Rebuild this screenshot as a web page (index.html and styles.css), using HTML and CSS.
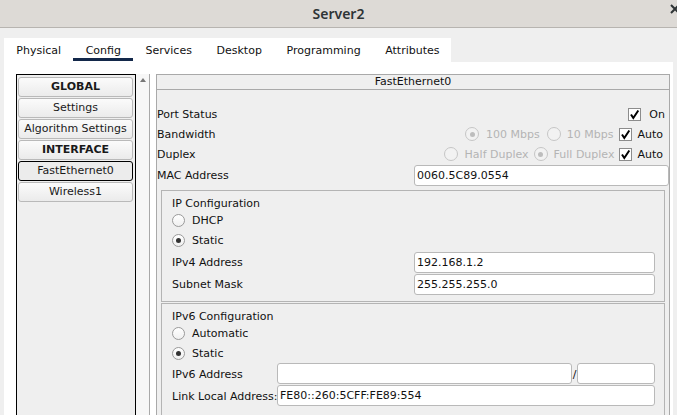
FILE: index.html
```html
<!DOCTYPE html>
<html>
<head>
<meta charset="utf-8">
<link rel="stylesheet" href="styles.css">
</head>
<body>
<div class="titlebar">
  <span class="title">Server2</span>
  <svg class="close" width="12" height="12" viewBox="0 0 12 12"><path d="M2 2 L10 10 M10 2 L2 10" stroke="#2e3436" stroke-width="2" fill="none"/></svg>
</div>
<div class="tabbar">
  <div class="tabs">
    <span class="tab">Physical</span>
    <span class="tab active">Config</span>
    <span class="tab">Services</span>
    <span class="tab">Desktop</span>
    <span class="tab">Programming</span>
    <span class="tab">Attributes</span>
  </div>
</div>
<div class="page">
  <div class="sidebar">
    <div class="btn bold">GLOBAL</div>
    <div class="btn">Settings</div>
    <div class="btn">Algorithm Settings</div>
    <div class="btn bold">INTERFACE</div>
    <div class="btn sel">FastEthernet0</div>
    <div class="btn">Wireless1</div>
  </div>
  <div class="scroll"><span class="arrow"></span></div>
  <div class="panel">
    <div class="phead">FastEthernet0</div>
    <div class="pbody">
      <div class="row">
        <span class="lbl">Port Status</span>
        <div class="ctrls pad5">
          <span class="chk"><svg width="11" height="11" viewBox="0 0 11 11"><path d="M2 5.5 L4.3 9 L9.3 1.5" stroke="#000" stroke-width="2" fill="none"/></svg></span>
          <span class="gap8">On</span>
        </div>
      </div>
      <div class="row">
        <span class="lbl">Bandwidth</span>
        <div class="ctrls">
          <span class="radio dis on"></span><span class="dtxt g7">100 Mbps</span>
          <span class="radio dis g7"></span><span class="dtxt g6">10 Mbps</span>
          <span class="chk g6"><svg width="11" height="11" viewBox="0 0 11 11"><path d="M2 5.5 L4.3 9 L9.3 1.5" stroke="#000" stroke-width="2" fill="none"/></svg></span><span class="g5">Auto</span>
        </div>
      </div>
      <div class="row">
        <span class="lbl">Duplex</span>
        <div class="ctrls">
          <span class="radio dis"></span><span class="dtxt g7">Half Duplex</span>
          <span class="radio dis on g5"></span><span class="dtxt g6">Full Duplex</span>
          <span class="chk g5"><svg width="11" height="11" viewBox="0 0 11 11"><path d="M2 5.5 L4.3 9 L9.3 1.5" stroke="#000" stroke-width="2" fill="none"/></svg></span><span class="g5">Auto</span>
        </div>
      </div>
      <div class="row mac">
        <span class="lbl maclbl">MAC Address</span>
        <div class="input grow">0060.5C89.0554</div>
      </div>

      <div class="group ipv4">
        <div class="gtitle">IP Configuration</div>
        <div class="rrow"><span class="radio en"></span><span class="g7">DHCP</span></div>
        <div class="rrow"><span class="radio en on"></span><span class="g7">Static</span></div>
        <div class="irow"><span class="glbl">IPv4 Address</span><div class="input grow">192.168.1.2</div></div>
        <div class="irow"><span class="glbl">Subnet Mask</span><div class="input grow">255.255.255.0</div></div>
      </div>

      <div class="group ipv6">
        <div class="gtitle">IPv6 Configuration</div>
        <div class="rrow"><span class="radio en"></span><span class="g7">Automatic</span></div>
        <div class="rrow"><span class="radio en on"></span><span class="g7">Static</span></div>
        <div class="irow"><span class="glbl6">IPv6 Address</span><div class="input grow"></div><span class="slash">/</span><div class="input prefix"></div></div>
        <div class="irow"><span class="glbl6">Link Local Address:</span><div class="input grow">FE80::260:5CFF:FE89:554</div></div>
      </div>
    </div>
  </div>
</div>
</body>
</html>
```
FILE: styles.css
```css
* { box-sizing: border-box; }
body {
  margin: 0;
  font: 11px "DejaVu Sans", sans-serif;
  color: #111;
  background: #efefef;
  height: 415px;
  overflow: hidden;
}
.titlebar {
  height: 28px;
  background: #dddad6;
  border-bottom: 1px solid #b7b4b0;
  display: flex;
  align-items: center;
  justify-content: center;
  position: relative;
}
.title {
  font-family: "Noto Sans", sans-serif;
  font-weight: 600;
  font-size: 14px;
  color: #2e3436;
}
.close { position: absolute; right: -4px; top: 3px; }
.tabbar { padding: 10px 0 0 4px; }
.tabs {
  display: flex;
  background: #fff;
  width: 447px;
  height: 24px;
}
.tab {
  padding: 2px 12.3px 0;
  line-height: 22px;
  position: relative;
  color: #111;
}
.tab.active::after {
  content: "";
  position: absolute;
  left: 0; right: 0; bottom: 1px;
  height: 3px;
  background: #13284a;
}
.page {
  background: #fff;
  margin: 0 4px;
  display: flex;
  align-items: flex-start;
  padding: 12px 3px 0 12px;
  height: 360px;
}
.sidebar {
  width: 120px;
  height: 400px;
  border: 1px solid #000;
  background: #efefef;
  padding: 2px 2px 0 1px;
  flex: none;
}
.btn {
  height: 20px;
  margin-bottom: 1px;
  border: 1px solid #b9b9b9;
  border-radius: 3px;
  background: linear-gradient(#fbfbfb, #ebebeb);
  text-align: center;
  line-height: 18px;
  color: #1a1a1a;
}
.btn.bold { font-weight: bold; }
.btn.sel { border-color: #000; background: #ececec; }
.scroll {
  width: 14px;
  height: 400px;
  background: #f7f7f7;
  border-right: 1px solid #a9a9a9;
  flex: none;
  display: flex;
  justify-content: center;
  padding-top: 4px;
}
.arrow {
  width: 0; height: 0;
  border-left: 3.5px solid transparent;
  border-right: 3.5px solid transparent;
  border-bottom: 4px solid #777;
}
.panel {
  width: 514px;
  height: 400px;
  margin-left: 6px;
  border: 1px solid #a9a9a9;
  background: #efefef;
  flex: none;
}
.phead {
  height: 15px;
  border-bottom: 1px solid #a9a9a9;
  text-align: center;
  line-height: 13px;
}
.pbody { padding: 14px 0 0 0; }
.row {
  height: 20px;
  display: flex;
  align-items: center;
}
.ctrls {
  margin-left: auto;
  display: flex;
  align-items: center;
  padding-right: 6px;
}
.ctrls.pad5 { padding-right: 4px; }
.row.mac { height: 21px; margin-top: 1px; }
.maclbl { width: 257px; flex: none; }
.dtxt { color: #b4b4b4; }
.g5 { margin-left: 5px; }
.g6 { margin-left: 6px; }
.g7 { margin-left: 7px; }
.gap8 { margin-left: 8px; }
.chk {
  width: 13px; height: 13px;
  border: 1px solid #8c8c8c;
  background: #fff;
  display: flex;
  align-items: center;
  justify-content: center;
  flex: none;
}
.radio {
  width: 13px; height: 13px;
  border-radius: 50%;
  border: 1px solid #9a9a9a;
  background: linear-gradient(#fff, #f0f0f0);
  display: flex;
  align-items: center;
  justify-content: center;
  flex: none;
}
.radio.dis { width: 14px; height: 14px; border-color: #c6c6c6; background: #f2f2f2; }
.radio.on::after {
  content: "";
  width: 5px; height: 5px;
  border-radius: 50%;
  background: #333;
}
.radio.dis.on::after { background: #bdbdbd; }
.input {
  height: 21px;
  border: 1px solid #b9b9b9;
  border-radius: 3px;
  background: #fff;
  padding-left: 2px;
  line-height: 19px;
  color: #111;
}
.grow { flex: 1; }
.group {
  border: 1px solid #b4b4b4;
  margin: 4px 4px 0 4px;
  padding: 5px 9px 7px 10px;
}
.group.ipv6 { margin-top: 1px; padding-bottom: 30px; }
.gtitle { height: 14px; line-height: 15px; }
.rrow {
  height: 20px;
  display: flex;
  align-items: center;
}
.irow {
  height: 22px;
  display: flex;
  align-items: center;
  padding-top: 2px;
}
.ipv6 .irow { padding-top: 0; }
.irow .input { align-self: flex-start; }
.glbl { width: 242px; flex: none; }
.glbl6 { width: 105px; flex: none; white-space: nowrap; }
.slash { width: 5px; text-align: center; align-self: center; }
.prefix { width: 78px; flex: none; }
```
